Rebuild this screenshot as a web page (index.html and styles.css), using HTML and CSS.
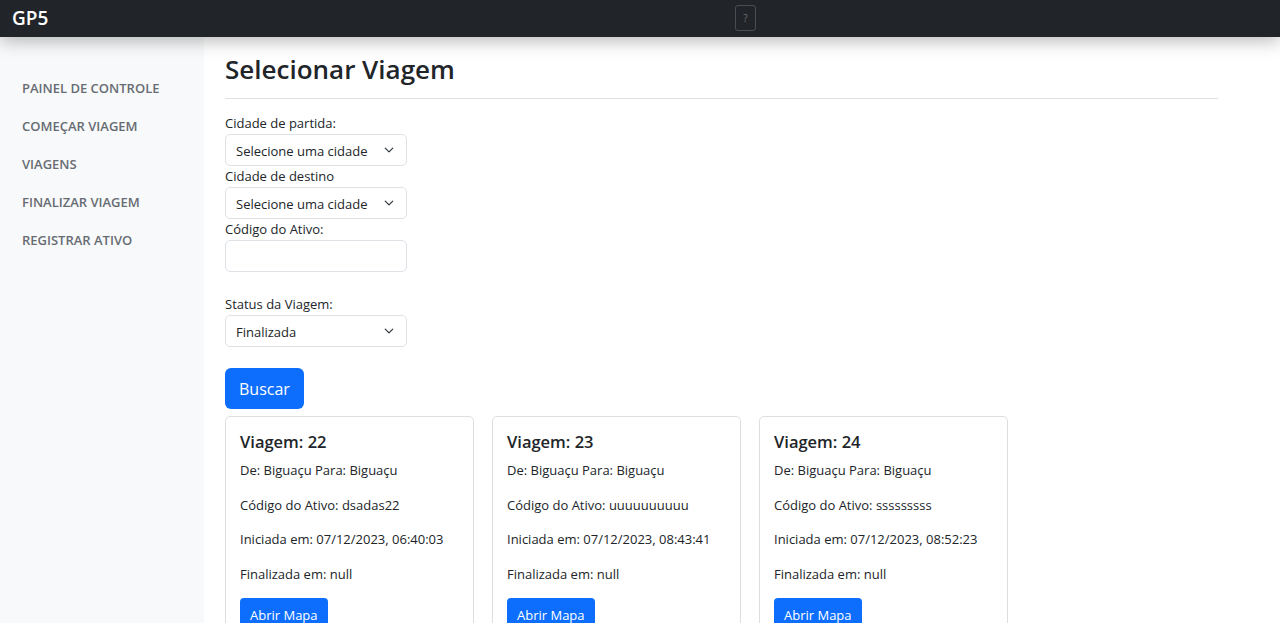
FILE: index.html
```html
<!DOCTYPE html>
<html lang="pt-BR">
<head>
<meta charset="utf-8">
<title>GP5</title>
<link rel="stylesheet" href="styles.css">
</head>
<body>
<header class="topbar">
  <span class="brand">GP5</span>
  <button class="help-btn" type="button">?</button>
</header>
<div class="layout">
  <nav class="sidebar">
    <a class="nav-link" href="#">PAINEL DE CONTROLE</a>
    <a class="nav-link" href="#">COMEÇAR VIAGEM</a>
    <a class="nav-link" href="#">VIAGENS</a>
    <a class="nav-link" href="#">FINALIZAR VIAGEM</a>
    <a class="nav-link" href="#">REGISTRAR ATIVO</a>
  </nav>
  <main class="main">
    <h2 class="page-title">Selecionar Viagem</h2>
    <form class="filters">
      <label class="label">Cidade de partida:</label>
      <div class="select-wrap">
        <select class="select"><option>Selecione uma cidade</option></select>
        <svg class="chev" width="10" height="10" viewBox="0 0 16 16"><path d="m2 5 6 6 6-6" fill="none" stroke="#343a40" stroke-width="2" stroke-linecap="round" stroke-linejoin="round"/></svg>
      </div>
      <label class="label">Cidade de destino</label>
      <div class="select-wrap">
        <select class="select"><option>Selecione uma cidade</option></select>
        <svg class="chev" width="10" height="10" viewBox="0 0 16 16"><path d="m2 5 6 6 6-6" fill="none" stroke="#343a40" stroke-width="2" stroke-linecap="round" stroke-linejoin="round"/></svg>
      </div>
      <label class="label">Código do Ativo:</label>
      <input class="input" type="text">
      <label class="label label-gap">Status da Viagem:</label>
      <div class="select-wrap">
        <select class="select"><option>Finalizada</option></select>
        <svg class="chev" width="10" height="10" viewBox="0 0 16 16"><path d="m2 5 6 6 6-6" fill="none" stroke="#343a40" stroke-width="2" stroke-linecap="round" stroke-linejoin="round"/></svg>
      </div>
      <button class="btn-search" type="button">Buscar</button>
    </form>
    <section class="cards">
      <article class="card">
        <h5 class="card-title">Viagem: 22</h5>
        <p class="card-text">De: Biguaçu Para: Biguaçu</p>
        <p class="card-text">Código do Ativo: dsadas22</p>
        <p class="card-text">Iniciada em: 07/12/2023, 06:40:03</p>
        <p class="card-text">Finalizada em: null</p>
        <button class="btn-map" type="button">Abrir Mapa</button>
      </article>
      <article class="card">
        <h5 class="card-title">Viagem: 23</h5>
        <p class="card-text">De: Biguaçu Para: Biguaçu</p>
        <p class="card-text">Código do Ativo: uuuuuuuuuu</p>
        <p class="card-text">Iniciada em: 07/12/2023, 08:43:41</p>
        <p class="card-text">Finalizada em: null</p>
        <button class="btn-map" type="button">Abrir Mapa</button>
      </article>
      <article class="card">
        <h5 class="card-title">Viagem: 24</h5>
        <p class="card-text">De: Biguaçu Para: Biguaçu</p>
        <p class="card-text">Código do Ativo: sssssssss</p>
        <p class="card-text">Iniciada em: 07/12/2023, 08:52:23</p>
        <p class="card-text">Finalizada em: null</p>
        <button class="btn-map" type="button">Abrir Mapa</button>
      </article>
    </section>
  </main>
</div>
</body>
</html>
```
FILE: styles.css
```css
* { box-sizing: border-box; }
html, body { margin: 0; height: 100%; overflow: hidden; }
body {
  font-family: "Open Sans", "Noto Sans", sans-serif;
  font-size: 13px;
  line-height: 21px;
  color: #212529;
  background: #fff;
}
.topbar {
  position: relative;
  z-index: 2;
  height: 37px;
  background: #212529;
  display: flex;
  align-items: center;
  padding-left: 12px;
  box-shadow: 0 4px 18px rgba(0,0,0,.28);
}
.brand {
  color: #fff;
  font-size: 19px;
  font-weight: 600;
  line-height: 1;
}
.help-btn {
  position: absolute;
  left: 735px;
  top: 5px;
  width: 21px;
  height: 26px;
  padding: 0;
  background: transparent;
  border: 1px solid #4a4e53;
  border-radius: 3px;
  color: #6c7075;
  font-family: "Open Sans", sans-serif;
  font-size: 10px;
}
.layout {
  display: flex;
  height: calc(100% - 37px);
}
.sidebar {
  width: 204px;
  flex: none;
  background: #f8f9fa;
  display: flex;
  flex-direction: column;
  padding-top: 40px;
}
.nav-link {
  display: block;
  padding: 0 0 0 22px;
  height: 38px;
  line-height: 22px;
  color: #676c73;
  font-weight: 600;
  font-size: 13px;
  text-decoration: none;
}
.main {
  flex: 1;
  padding: 17px 62px 0 21px;
}
.page-title {
  margin: 0 0 14px;
  padding-bottom: 13px;
  border-bottom: 1px solid #dee2e6;
  font-size: 26px;
  font-weight: 600;
  line-height: 31px;
  color: #212529;
}
.filters {
  display: flex;
  flex-direction: column;
  align-items: flex-start;
}
.label {
  display: block;
  line-height: 21px;
}
.label-gap { margin-top: 22px; }
.select-wrap {
  position: relative;
  width: 182px;
}
.select {
  appearance: none;
  -webkit-appearance: none;
  display: block;
  width: 182px;
  height: 32px;
  padding: 1px 30px 0 10px;
  border: 1px solid #dee2e6;
  border-radius: 5px;
  background: #fff;
  font-family: inherit;
  font-size: 13px;
  color: #212529;
}
.chev {
  position: absolute;
  right: 13px;
  top: 11px;
  pointer-events: none;
}
.input {
  display: block;
  width: 182px;
  height: 32px;
  border: 1px solid #dee2e6;
  border-radius: 5px;
  background: #fff;
}
.btn-search {
  margin-top: 21px;
  height: 41px;
  padding: 1px 14px 0;
  border: 0;
  border-radius: 6px;
  background: #0d6efd;
  color: #fff;
  font-family: inherit;
  font-size: 16px;
}
.cards {
  display: flex;
  gap: 18px;
  margin-top: 7px;
}
.card {
  width: 249px;
  border: 1px solid #dcdfe2;
  border-radius: 5px;
  padding: 14px 14px;
  height: 260px;
}
.card-title {
  margin: 0 0 8px;
  font-size: 16.5px;
  font-weight: 600;
  line-height: 21px;
}
.card-text {
  margin: 0 0 13.5px;
  line-height: 21px;
}
.btn-map {
  height: 32px;
  padding: 1px 10px 0;
  border: 0;
  border-radius: 4px;
  background: #0d6efd;
  color: #fff;
  font-family: inherit;
  font-size: 13px;
}
```
